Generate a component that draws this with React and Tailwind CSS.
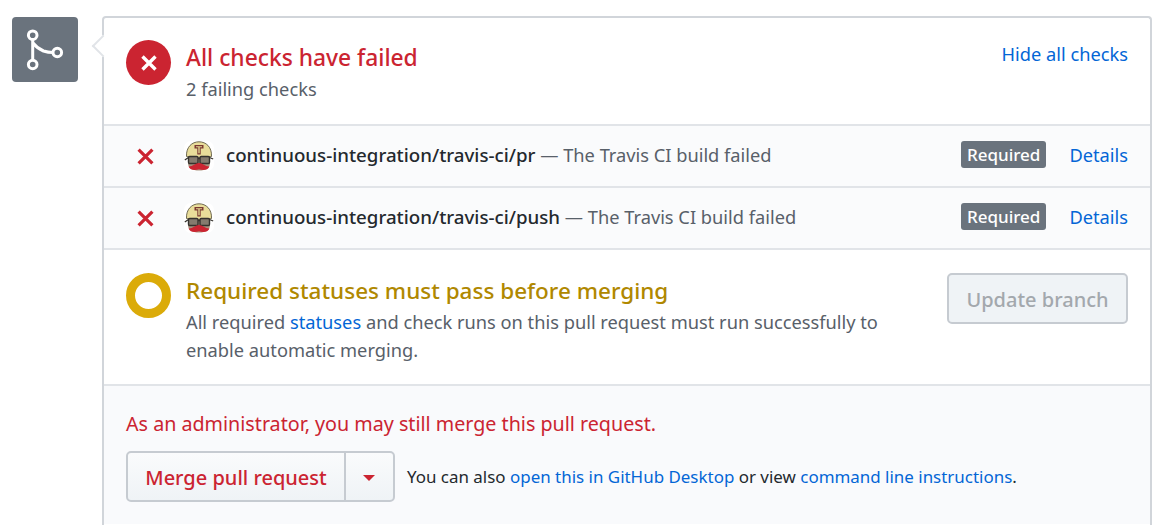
const FONT = "font-['Noto_Sans',sans-serif]";

function MergeIcon() {
  return (
    <svg width="38" height="42" viewBox="0 0 38 42" fill="none" stroke="white" strokeWidth="3">
      <circle cx="6.7" cy="6.2" r="4.3" />
      <circle cx="6.7" cy="35.5" r="4.3" />
      <circle cx="31.3" cy="23.5" r="4.3" />
      <path d="M6.7 10.5V31" />
      <path d="M7 14c3 4 7 6.5 10.5 8c3 1 6 1.5 9.5 1.5" />
    </svg>
  );
}

function Cross({ size, stroke }) {
  return (
    <svg width={size} height={size} viewBox="0 0 16 16" fill="none" stroke="currentColor" strokeWidth={stroke}>
      <path d="M1.5 1.5l13 13M14.5 1.5l-13 13" />
    </svg>
  );
}

function TravisAvatar() {
  return (
    <svg width="30" height="30" viewBox="0 0 30 30" className="mb-[1px] shrink-0">
      <rect width="30" height="30" rx="7" fill="#fff" />
      <path d="M4 15h22v7c0 5-4 7.500-11 7.500S4 27 4 22z" fill="#a8917e" />
      <path d="M2.500 15.500C2 6 8 .8 15 .8s13 5.200 12.500 14.700c-7 1.800-18 1.800-25 0z" fill="#e9dd9a" stroke="#6f6a52" strokeWidth="1" />
      <path d="M10.500 4h9v3.500h-2.800v6h-3.400v-6h-2.800z" fill="#7c3a33" />
      <path d="M12 5.200h6v1h-2.300v6h-1.400v-6H12z" fill="#e0d48f" />
      <rect x="4.500" y="15.500" width="9.500" height="7" rx="1.200" fill="#857b6e" stroke="#35322e" strokeWidth="1.400" />
      <rect x="16" y="15.500" width="9.500" height="7" rx="1.200" fill="#857b6e" stroke="#35322e" strokeWidth="1.400" />
      <path d="M14 17.500h2" stroke="#35322e" strokeWidth="1.400" />
      <path d="M.8 19l3.700-2.500M25.500 16.500l3.700 1.500" stroke="#35322e" strokeWidth="1.200" />
      <path d="M4.500 25.500c3.500.5 7-3.500 10.500-3.500s7 4 10.500 3.500c-1.500 4-7 4-10.500 2.700c-3.500 1.300-9 1.300-10.500-2.700z" fill="#cb2431" />
    </svg>
  );
}

function CheckRow({ name }) {
  return (
    <div className="flex h-[62px] items-center border-t-2 border-[#e1e4e8] bg-[#fafbfc] pr-[22px] pl-[33px]">
      <div className="w-5 text-[#cb2431]">
        <Cross size={17} stroke={3} />
      </div>
      <div className="ml-[27px]">
        <TravisAvatar />
      </div>
      <div className="ml-3 pb-[2px] text-[18.25px] text-[#586069]">
        <span className="text-[18.7px] font-medium text-[#24292e]">{name}</span> — The Travis CI build failed
      </div>
      <div className="mb-[3px] ml-auto rounded-[3px] bg-[#6a737d] px-[6px] text-[17px] leading-[27px] font-medium text-white">
        Required
      </div>
      <a className="ml-[23px] pb-[2px] text-[18.25px] text-[#0366d6]">Details</a>
    </div>
  );
}

export default function App() {
  return (
    <div className={`${FONT} flex h-[525px] w-[1152px] items-start overflow-hidden bg-white pt-4 pl-3`}>
      <div className="mt-[1px] flex h-[65px] w-[66px] shrink-0 items-center justify-center rounded-[4px] bg-[#6a737d]">
        <MergeIcon />
      </div>
      <div className="relative ml-6 h-[520px] w-[1050px] rounded-t-[4px] border-2 border-b-0 border-[#d1d5da]">
        <div className="absolute top-[20px] -left-[9px] h-4 w-4 rotate-45 border-b-2 border-l-2 border-[#e1e4e8] bg-white" />

        <div className="relative flex h-[106px] items-start px-[22px] pt-[22px]">
          <div className="flex h-[45px] w-[45px] shrink-0 items-center justify-center rounded-full bg-[#cb2431] text-white">
            <Cross size={16} stroke={3.4} />
          </div>
          <div className="ml-[15px]">
            <div className="text-[22.8px] leading-[36px] font-medium text-[#cb2431]">All checks have failed</div>
            <div className="-mt-[1px] text-[18.25px] leading-[27px] text-[#586069]">2 failing checks</div>
          </div>
          <a className="ml-auto text-[18.25px] leading-[28px] text-[#0366d6]">Hide all checks</a>
        </div>

        <CheckRow name="continuous-integration/travis-ci/pr" />
        <CheckRow name="continuous-integration/travis-ci/push" />

        <div className="flex h-[136px] items-start border-t-2 border-[#e1e4e8] px-[22px] pt-[23px]">
          <div className="h-[45px] w-[45px] shrink-0 rounded-full border-[9px] border-[#dbab09]" />
          <div className="ml-[15px] w-[720px]">
            <div className="text-[22.5px] leading-[36px] font-medium text-[#b08800]">Required statuses must pass before merging</div>
            <div className="-mt-[1px] text-[18.25px] leading-[28px] text-[#586069]">
              All required <a className="text-[#0366d6]">statuses</a> and check runs on this pull request must run successfully to enable automatic merging.
            </div>
          </div>
          <button className="ml-auto h-[51px] w-[181px] rounded-[5px] border-2 border-[#c6cbd1] bg-[#eff3f6] pt-[3px] text-[20px] font-medium text-[#a3a8ad]">
            Update branch
          </button>
        </div>

        <div className="h-[140px] border-t-2 border-[#e1e4e8] bg-[#f9fafc] px-[22px] pt-[20px]">
          <div className="text-[19.7px] leading-[36px] text-[#cb2431]">As an administrator, you may still merge this pull request.</div>
          <div className="mt-[9px] flex items-center">
            <div className="flex h-[51px] rounded-[5px] border-2 border-[#c6cbd1] bg-gradient-to-b from-[#fafbfc] to-[#eff3f6]">
              <button className="w-[216px] pt-[3px] text-[20px] font-medium text-[#cb2431]">Merge pull request</button>
              <button className="flex w-[49px] items-center justify-center border-l-2 border-[#c6cbd1] pt-[2px] pr-[2px]">
                <span className="h-0 w-0 border-x-[6px] border-t-[6px] border-x-transparent border-t-[#cb2431]" />
              </button>
            </div>
            <div className="ml-3 text-[16.95px] text-[#24292e]">
              You can also <a className="text-[#0366d6]">open this in GitHub Desktop</a> or view <a className="text-[#0366d6]">command line instructions</a>.
            </div>
          </div>
        </div>
      </div>
    </div>
  );
}
